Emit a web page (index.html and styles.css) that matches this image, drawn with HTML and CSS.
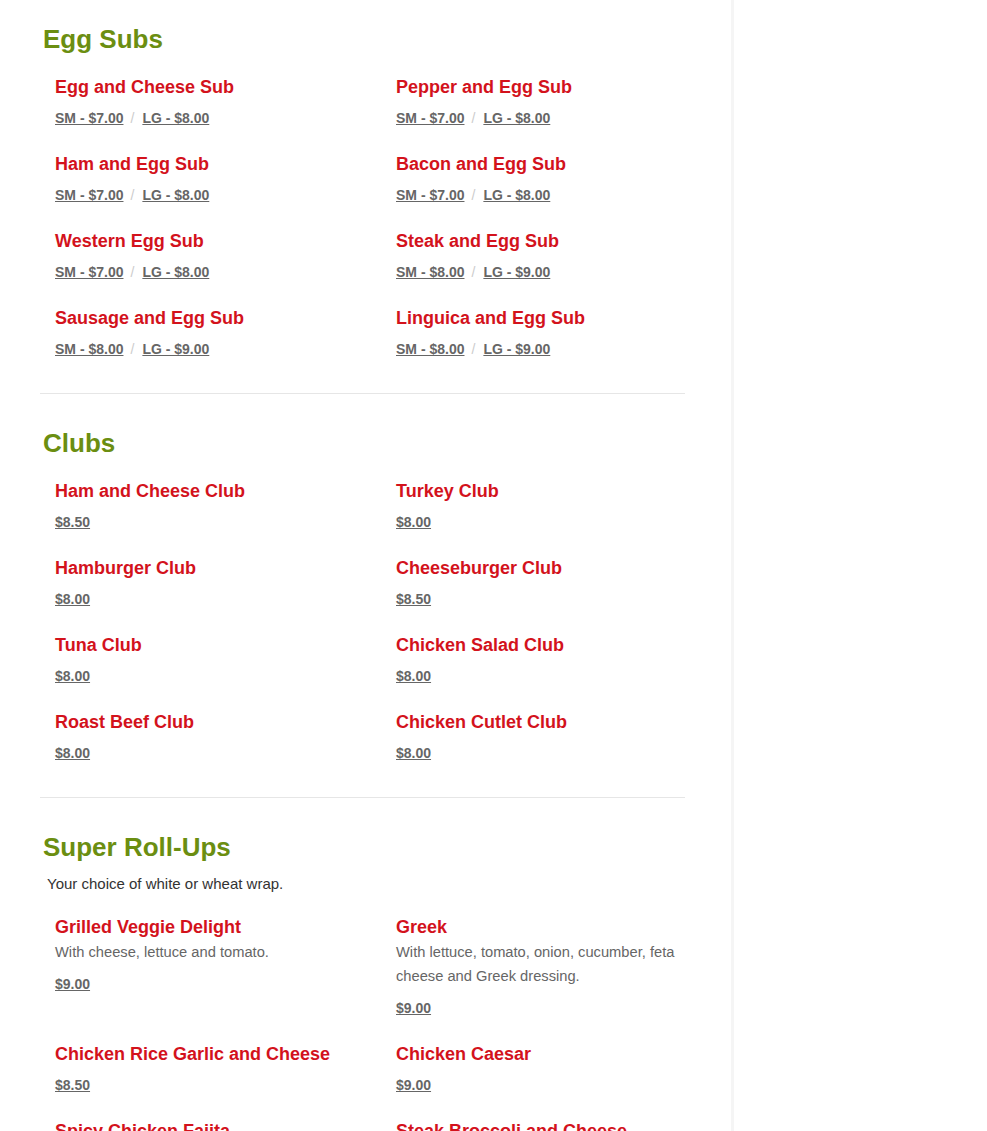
FILE: index.html
```html
<!DOCTYPE html>
<html lang="en">
<head>
<meta charset="utf-8">
<title>Menu</title>
<link rel="stylesheet" href="styles.css">
</head>
<body>
<div class="page">
  <main class="main">
    <section class="menu-section first">
      <h2 class="section-title">Egg Subs</h2>
      <ul class="items">
        <li class="item"><h3 class="item-title">Egg and Cheese Sub</h3><div class="price"><a href="#">SM - $7.00</a><span class="sep">/</span><a href="#">LG - $8.00</a></div></li>
        <li class="item"><h3 class="item-title">Pepper and Egg Sub</h3><div class="price"><a href="#">SM - $7.00</a><span class="sep">/</span><a href="#">LG - $8.00</a></div></li>
        <li class="item"><h3 class="item-title">Ham and Egg Sub</h3><div class="price"><a href="#">SM - $7.00</a><span class="sep">/</span><a href="#">LG - $8.00</a></div></li>
        <li class="item"><h3 class="item-title">Bacon and Egg Sub</h3><div class="price"><a href="#">SM - $7.00</a><span class="sep">/</span><a href="#">LG - $8.00</a></div></li>
        <li class="item"><h3 class="item-title">Western Egg Sub</h3><div class="price"><a href="#">SM - $7.00</a><span class="sep">/</span><a href="#">LG - $8.00</a></div></li>
        <li class="item"><h3 class="item-title">Steak and Egg Sub</h3><div class="price"><a href="#">SM - $8.00</a><span class="sep">/</span><a href="#">LG - $9.00</a></div></li>
        <li class="item"><h3 class="item-title">Sausage and Egg Sub</h3><div class="price"><a href="#">SM - $8.00</a><span class="sep">/</span><a href="#">LG - $9.00</a></div></li>
        <li class="item"><h3 class="item-title">Linguica and Egg Sub</h3><div class="price"><a href="#">SM - $8.00</a><span class="sep">/</span><a href="#">LG - $9.00</a></div></li>
      </ul>
    </section>
    <section class="menu-section">
      <h2 class="section-title">Clubs</h2>
      <ul class="items">
        <li class="item"><h3 class="item-title">Ham and Cheese Club</h3><div class="price"><a href="#">$8.50</a></div></li>
        <li class="item"><h3 class="item-title">Turkey Club</h3><div class="price"><a href="#">$8.00</a></div></li>
        <li class="item"><h3 class="item-title">Hamburger Club</h3><div class="price"><a href="#">$8.00</a></div></li>
        <li class="item"><h3 class="item-title">Cheeseburger Club</h3><div class="price"><a href="#">$8.50</a></div></li>
        <li class="item"><h3 class="item-title">Tuna Club</h3><div class="price"><a href="#">$8.00</a></div></li>
        <li class="item"><h3 class="item-title">Chicken Salad Club</h3><div class="price"><a href="#">$8.00</a></div></li>
        <li class="item"><h3 class="item-title">Roast Beef Club</h3><div class="price"><a href="#">$8.00</a></div></li>
        <li class="item"><h3 class="item-title">Chicken Cutlet Club</h3><div class="price"><a href="#">$8.00</a></div></li>
      </ul>
    </section>
    <section class="menu-section">
      <h2 class="section-title">Super Roll-Ups</h2>
      <p class="intro">Your choice of white or wheat wrap.</p>
      <ul class="items">
        <li class="item"><h3 class="item-title">Grilled Veggie Delight</h3><p class="desc">With cheese, lettuce and tomato.</p><div class="price"><a href="#">$9.00</a></div></li>
        <li class="item"><h3 class="item-title">Greek</h3><p class="desc">With lettuce, tomato, onion, cucumber, feta cheese and Greek dressing.</p><div class="price"><a href="#">$9.00</a></div></li>
        <li class="item"><h3 class="item-title">Chicken Rice Garlic and Cheese</h3><div class="price"><a href="#">$8.50</a></div></li>
        <li class="item"><h3 class="item-title">Chicken Caesar</h3><div class="price"><a href="#">$9.00</a></div></li>
        <li class="item"><h3 class="item-title">Spicy Chicken Fajita</h3><div class="price"><a href="#">$9.00</a></div></li>
        <li class="item"><h3 class="item-title">Steak Broccoli and Cheese</h3><div class="price"><a href="#">$9.00</a></div></li>
      </ul>
    </section>
  </main>
  <aside class="sidebar"></aside>
</div>
</body>
</html>
```

FILE: styles.css
```css
html, body {
  margin: 0;
  padding: 0;
  background: #ffffff;
}

body {
  font-family: "Liberation Sans", Arial, sans-serif;
  color: #333333;
}

.page {
  display: flex;
  min-height: 1131px;
}

.main {
  width: 731px;
  flex: 0 0 731px;
  border-right: 3px solid #f5f5f5;
  box-sizing: content-box;
}

.sidebar {
  flex: 1;
}

.menu-section {
  margin: 0 46px 0 40px;
  padding: 34px 0 35px;
  border-bottom: 1px solid #e6e6e6;
}

.menu-section.first {
  padding-top: 24px;
}

.section-title {
  margin: 0;
  padding-left: 3px;
  font-size: 26px;
  line-height: 30px;
  font-weight: bold;
  color: #6b8e11;
}

.intro {
  margin: 10px 0 0;
  padding-left: 7px;
  font-size: 15px;
  line-height: 24px;
  color: #333333;
}

.items {
  list-style: none;
  margin: 22px 0 0;
  padding: 0;
  display: grid;
  grid-template-columns: 341px 341px;
  row-gap: 26px;
}

.intro + .items {
  margin-top: 20px;
}

.item {
  padding: 0 15px;
}

.item-title {
  margin: 0;
  font-size: 18px;
  line-height: 22px;
  font-weight: bold;
  color: #d3121c;
}

.desc {
  margin: 2px 0 0;
  font-size: 14.7px;
  line-height: 24px;
  color: #666666;
}

.price {
  margin-top: 11px;
  font-size: 14px;
  line-height: 18px;
  font-weight: bold;
}

.price a {
  color: #666666;
  text-decoration: underline;
}

.sep {
  margin: 0 8px 0 7px;
  font-weight: normal;
  color: #cccccc;
}
```
